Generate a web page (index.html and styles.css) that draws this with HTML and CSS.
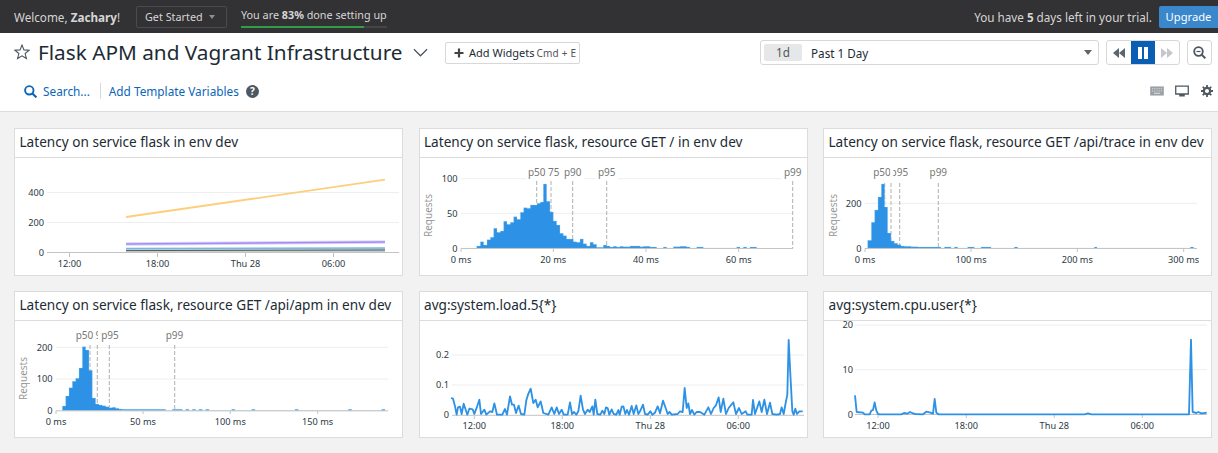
FILE: index.html
```html
<!DOCTYPE html>
<html lang="en">
<head>
    <meta charset="UTF-8">
    <title>Flask APM and Vagrant Infrastructure</title>
    <link rel="stylesheet" href="styles.css">
</head>
<body>
    <!-- Trial bar -->
    <div class="topbar">
        <span class="welcome">Welcome, <b>Zachary</b>!</span>
        <div class="get-started">Get Started <i class="caret-small"></i></div>
        <div class="setup">
            <span>You are <b>83%</b> done setting up</span>
            <div class="setup-track"><div class="setup-fill"></div></div>
        </div>
        <span class="trial">You have <b>5</b> days left in your trial.</span>
        <button class="upgrade" type="button">Upgrade</button>
    </div>

    <!-- Dashboard header -->
    <div class="header">
        <div class="title-row">
            <svg class="star" viewBox="0 0 18 18"><polygon points="9,1.2 11.2,6.6 17,7 12.5,10.7 14,16.4 9,13.3 4,16.4 5.5,10.7 1,7 6.8,6.6" fill="none" stroke="#4a5560" stroke-width="1.2"/></svg>
            <h1>Flask APM and Vagrant Infrastructure</h1>
            <svg class="chevron" viewBox="0 0 16 9"><polyline points="1,1 8,8 15,1" fill="none" stroke="#4a5560" stroke-width="1.3"/></svg>
            <button class="add-widgets" type="button">
                <svg viewBox="0 0 10 10"><path d="M5 0.5V9.5M0.5 5H9.5" stroke="#444" stroke-width="2.2"/></svg>
                Add Widgets <span class="shortcut">Cmd + E</span>
            </button>
            <div class="time-select">
                <span class="chip">1d</span>
                <span class="time-label">Past 1 Day</span>
                <i class="caret"></i>
            </div>
            <div class="time-controls">
                <button type="button"><svg viewBox="0 0 12 10"><path d="M6 0V10L0 5ZM12 0V10L6 5Z" fill="#5c6670"/></svg></button>
                <button class="active" type="button"><svg viewBox="0 0 12 12"><path d="M1 0H5V12H1ZM7 0H11V12H7Z" fill="#fff"/></svg></button>
                <button type="button"><svg viewBox="0 0 12 10"><path d="M0 0V10L6 5ZM6 0V10L12 5Z" fill="#c4c8cc"/></svg></button>
            </div>
            <button class="zoom-btn" type="button">
                <svg viewBox="0 0 13 13"><circle cx="5.5" cy="5.5" r="4.3" fill="none" stroke="#4a5560" stroke-width="1.8"/><path d="M8.6 8.6L12.3 12.3" stroke="#4a5560" stroke-width="2"/><path d="M3.5 5.5H7.5" stroke="#4a5560" stroke-width="1.2"/></svg>
            </button>
        </div>
        <div class="var-row">
            <svg class="search" viewBox="0 0 13 13"><circle cx="5.3" cy="5.3" r="4.2" fill="none" stroke="#0a66b8" stroke-width="1.9"/><path d="M8.4 8.4L12.4 12.4" stroke="#0a66b8" stroke-width="2.1"/></svg>
            <span class="link">Search...</span>
            <span class="divider"></span>
            <span class="link">Add Template Variables</span>
            <span class="help">?</span>
            <div class="tools">
                <svg width="14" height="10" viewBox="0 0 15 11"><rect x="0" y="0.5" width="15" height="10" fill="#9aa0a6"/><path d="M2 3H13M2 5.5H13" stroke="#e4e6e8" stroke-dasharray="1 1" stroke-width="1"/><path d="M4 8H11" stroke="#e4e6e8" stroke-width="1"/></svg>
                <svg width="14" height="12" viewBox="0 0 15 13"><path fill-rule="evenodd" d="M0 0.5H15V10.5H0ZM1.4 1.9V9H13.6V1.9ZM4.5 10.5H10.5V12.5H4.5Z" fill="#4e5860"/></svg>
                <svg class="gear" width="12" height="12" viewBox="0 0 13 13"><circle cx="6.5" cy="6.5" r="3.4" fill="none" stroke="#4e5860" stroke-width="2.4"/><path d="M6.5 0V13M0 6.5H13M1.9 1.9L11.1 11.1M11.1 1.9L1.9 11.1" stroke="#4e5860" stroke-width="1.9" stroke-dasharray="2.4 8.2 2.4 0"/></svg>
            </div>
        </div>
    </div>

    <div class="board">
        <!-- Widget 1 -->
        <div class="widget">
            <div class="widget-title">Latency on service flask in env dev</div>
            <svg class="chart" viewBox="15 158 387 117">
                <path class="grid" d="M47 192.5H399M47 222.5H399"/>
                <path class="axis" d="M47 252.5H399M69.5 252.5V257M157.5 252.5V257M245.5 252.5V257M333.5 252.5V257"/>
                <text class="tick end" x="44" y="195.5">400</text>
                <text class="tick end" x="44" y="225.5">200</text>
                <text class="tick end" x="44" y="255.5">0</text>
                <text class="tick mid" x="69.5" y="266.5">12:00</text>
                <text class="tick mid" x="157.5" y="266.5">18:00</text>
                <text class="tick mid" x="245.5" y="266.5">Thu 28</text>
                <text class="tick mid" x="333.5" y="266.5">06:00</text>
                <polyline class="line-yellow" points="126,217 385,179.7"/>
                <polyline class="line-halo" points="126,244 385,242"/>
                <polyline class="line-purple" points="126,244 385,242"/>
                <polyline class="line-steel" points="126,250 385,250"/>
                <polyline class="line-pale" points="126,248.6 385,248"/>
                <polyline class="line-dark" points="126,250.6 385,250"/>
            </svg>
        </div>

        <!-- Widget 2 -->
        <div class="widget">
            <div class="widget-title">Latency on service flask, resource GET / in env dev</div>
            <svg class="chart" viewBox="420 158 387 117">
                <path class="grid" d="M461 178.7H793M461 213.3H793"/>
                <rect class="mask" x="526" y="166" width="22" height="14"/>
                <rect class="mask" x="548" y="166" width="14" height="14"/>
                <rect class="mask" x="562" y="166" width="22" height="14"/>
                <rect class="mask" x="595" y="166" width="23" height="14"/>
                <rect class="mask" x="781" y="166" width="24" height="14"/>
                <path class="pct-line" d="M536.7 181V248M551 181V248M572.7 181V248M606.7 181V248M792.7 181V248"/>
                <g transform="translate(415 125) scale(.33333)">
                    <path class="bars" d="M185 370V363H196V350H206V360H216V344H226V337H236V310H246V322H256V318H266V289H276V298H286V292H296V275H306V283H316V262H326V248H336V250H346V240H366V235H376V231H385V177H395V229H405V261H415V288H425V300H435V325H445V332H455V342H475V350H485V352H495V342H505V356H515V363H525V352H535V358H545V367H565V360H575V363H585V366H595V364H605V366H615V364H625V365H645V363H675V365H685V364H705V366H725V370H745V366H755V370H775V365H795V364H815V366H825V370H845V366H865V370H965V366H975V370H985V366H995V370H1005V366H1025V370Z"/>
                </g>
                <path class="axis" d="M461 248.5H793M461 248.5V252M553.3 248.5V252M646 248.5V252M738.7 248.5V252"/>
                <text class="pct mid" x="536.7" y="176">p50</text>
                <text class="pct mid" x="553.7" y="176">75</text>
                <text class="pct mid" x="572.7" y="176">p90</text>
                <text class="pct mid" x="606.7" y="176">p95</text>
                <text class="pct mid" x="792.7" y="176">p99</text>
                <text class="tick end" x="457.5" y="182">100</text>
                <text class="tick end" x="457.5" y="216.5">50</text>
                <text class="tick end" x="457.5" y="251.5">0</text>
                <text class="tick mid" x="461" y="262.5">0 ms</text>
                <text class="tick mid" x="553.3" y="262.5">20 ms</text>
                <text class="tick mid" x="646" y="262.5">40 ms</text>
                <text class="tick mid" x="738.7" y="262.5">60 ms</text>
                <text class="req" transform="translate(432 215.5) rotate(-90)">Requests</text>
            </svg>
        </div>

        <!-- Widget 3 -->
        <div class="widget">
            <div class="widget-title">Latency on service flask, resource GET /api/trace in env dev</div>
            <svg class="chart" viewBox="824 158 387 117">
                <path class="grid" d="M865 203.3H1197"/>
                <path class="pct-line" d="M884.7 183V248M891 183V248M899.7 183V248M938.3 183V248"/>
                <g transform="translate(818 125) scale(.33333)">
                    <path class="bars" d="M149 370V346H160V292H170V255H180V216H190V177H200V246H209V324H219V348H229V355H239V359H249V363H259V364H279V365H299V366H369V370H379V366H399V370H409V366H419V370H449V366H469V370H489V366H519V370H589V366H599V370H829V366H837V370H1117V366H1127V370Z"/>
                </g>
                <path class="axis" d="M865 248.5H1197M865 248.5V252M971 248.5V252M1077.3 248.5V252M1183.7 248.5V252"/>
                <text class="pct mid" x="882" y="176">p50</text>
                <text class="pct" x="890.6" y="176">p95</text>
                <rect class="mask" x="890.4" y="165" width="2.8" height="14"/>
                <text class="pct mid" x="938.3" y="176">p99</text>
                <text class="tick end" x="861.5" y="206.5">200</text>
                <text class="tick end" x="861.5" y="251.5">0</text>
                <text class="tick mid" x="865" y="262.5">0 ms</text>
                <text class="tick mid" x="971" y="262.5">100 ms</text>
                <text class="tick mid" x="1077.3" y="262.5">200 ms</text>
                <text class="tick mid" x="1183.7" y="262.5">300 ms</text>
                <text class="req" transform="translate(836.5 215.5) rotate(-90)">Requests</text>
            </svg>
        </div>

        <!-- Widget 4 -->
        <div class="widget">
            <div class="widget-title">Latency on service flask, resource GET /api/apm in env dev</div>
            <svg class="chart" viewBox="15 321 387 116">
                <path class="grid" d="M56 347.3H388M56 379H388"/>
                <path class="pct-line" d="M90 345V410M97.3 345V410M109.3 345V410M174.7 345V410"/>
                <g transform="translate(10 288) scale(.33333)">
                    <path class="bars" d="M157 368V354H167V324H177V299H187V280H197V271H207V240H217V176H227V186H237V247H247V330H257V348H267V351H277V353H287V356H297V359H307V358H317V361H327V363H337V364H467V368H487V364H517V368H527V364H537V368H547V364H557V368H567V364H577V368H587V364H597V368H665V364H675V368H725V364H735V368H855V364H865V368H1015V364H1025V368H1115V364H1125V368Z"/>
                </g>
                <path class="axis" d="M56 410.8H388M56 410.8V414M143 410.8V414M230.3 410.8V414M317.7 410.8V414"/>
                <text class="pct mid" x="84.5" y="339">p50</text>
                <text class="pct" x="95.5" y="339">9</text>
                <rect class="mask" x="98" y="328" width="3.5" height="14"/>
                <text class="pct mid" x="110" y="339">p95</text>
                <text class="pct mid" x="174.5" y="339">p99</text>
                <text class="tick end" x="52.5" y="350.5">200</text>
                <text class="tick end" x="52.5" y="382">100</text>
                <text class="tick end" x="52.5" y="414">0</text>
                <text class="tick mid" x="56" y="424.5">0 ms</text>
                <text class="tick mid" x="143" y="424.5">50 ms</text>
                <text class="tick mid" x="230.3" y="424.5">100 ms</text>
                <text class="tick mid" x="317.7" y="424.5">150 ms</text>
                <text class="req" transform="translate(27 378.5) rotate(-90)">Requests</text>
            </svg>
        </div>

        <!-- Widget 5 -->
        <div class="widget">
            <div class="widget-title">avg:system.load.5{*}</div>
            <svg class="chart" viewBox="420 321 387 116">
                <path class="grid" d="M452 355H804M452 385H804"/>
                <path class="axis" d="M452 415.3H804M474.3 415.3V419M562.3 415.3V419M650.3 415.3V419M738.3 415.3V419"/>
                <g transform="translate(415 288) scale(.33333)">
                    <polyline class="series" points="108,330 114,332 120,355 125,380 129,358 135,356 140,378 146,347 152,365 157,380 163,362 173,364 178,378 184,362 193,335 198,378 208,365 214,380 225,370 232,372 238,346 246,380 262,380 270,363 276,380 285,325 291,350 297,350 303,375 311,353 318,378 328,380 334,337 339,320 347,302 355,345 362,335 368,358 377,340 385,375 400,380 410,358 418,378 425,358 432,378 440,365 446,380 458,380 465,343 471,378 477,372 484,380 490,370 497,323 504,365 510,378 518,365 524,372 532,355 536,380 541,335 547,378 556,380 562,368 568,378 573,358 578,360 583,380 590,364 596,378 604,380 610,366 614,380 620,356 625,355 631,378 636,366 642,380 650,354 656,378 664,352 670,378 676,368 684,350 690,378 698,380 706,370 712,380 720,374 728,355 735,376 744,338 752,360 758,378 764,372 770,380 788,378 795,370 803,372 809,300 815,360 820,346 825,378 831,366 838,380 845,372 855,372 868,380 880,358 888,378 896,360 903,352 911,328 917,372 925,332 933,378 941,360 955,343 963,378 972,360 980,378 992,370 997,380 1010,380 1014,336 1020,378 1033,340 1040,372 1048,335 1056,378 1065,344 1072,378 1085,380 1095,378 1100,358 1106,378 1112,345 1117,320 1121,156 1126,258 1132,370 1136,380 1141,362 1146,378 1153,370 1163,370"/>
                </g>
                <text class="tick end" x="449" y="358">0.2</text>
                <text class="tick end" x="449" y="388">0.1</text>
                <text class="tick end" x="449" y="418">0</text>
                <text class="tick mid" x="474.3" y="429">12:00</text>
                <text class="tick mid" x="562.3" y="429">18:00</text>
                <text class="tick mid" x="650.3" y="429">Thu 28</text>
                <text class="tick mid" x="738.3" y="429">06:00</text>
            </svg>
        </div>

        <!-- Widget 6 -->
        <div class="widget">
            <div class="widget-title">avg:system.cpu.user{*}</div>
            <svg class="chart chart-tall" viewBox="824 321 387 116">
                <path class="grid" d="M855 325H1207M855 369.7H1207"/>
                <path class="axis" d="M855 414.5H1207M878 414.5V418M966.3 414.5V418M1054.3 414.5V418M1142.3 414.5V418"/>
                <g transform="translate(818 288) scale(.33333)">
                    <polyline class="series" points="111,322 116,372 135,374 140,379 155,379 160,368 165,366 170,343 175,368 180,378 185,379 250,379 258,375 268,377 276,372 285,376 292,378 315,379 325,371 335,373 345,377 350,333 355,374 362,379 800,379 810,376 820,379 1113,379 1119,155 1124,372 1135,375 1141,372 1150,376 1160,375 1166,374"/>
                </g>
                <text class="tick end" x="853" y="328">20</text>
                <text class="tick end" x="853" y="373">10</text>
                <text class="tick end" x="853" y="417.5">0</text>
                <text class="tick mid" x="878" y="429">12:00</text>
                <text class="tick mid" x="966.3" y="429">18:00</text>
                <text class="tick mid" x="1054.3" y="429">Thu 28</text>
                <text class="tick mid" x="1142.3" y="429">06:00</text>
            </svg>
        </div>
    </div>
</body>
</html>
```

FILE: styles.css
```css
/* Basic Styles */
* {
    box-sizing: border-box;
}
html, body {
    height: 100%;
}
body {
    margin: 0;
    background: #f2f2f2;
    color: #1c2b34;
    font-family: "Noto Sans", sans-serif;
    overflow: hidden;
}
button {
    font-family: inherit;
    cursor: pointer;
}

/* Trial bar */
.topbar {
    height: 33px;
    background: #323133;
    color: #d6d6d6;
    font-size: 11.7px;
    display: flex;
    align-items: center;
    padding-left: 14px;
}
.welcome {
    width: 122px;
    white-space: nowrap;
}
.get-started {
    width: 91px;
    height: 22px;
    border: 1px solid #4b4a4c;
    border-radius: 2px;
    display: flex;
    align-items: center;
    justify-content: space-between;
    padding: 0 11px 0 8px;
    font-size: 10.8px;
    white-space: nowrap;
}
.caret-small {
    border: 3px solid transparent;
    border-top: 4px solid #8d8d8d;
    border-bottom: 0;
}
.setup {
    margin-left: 14px;
    width: 146px;
    height: 22px;
    display: flex;
    flex-direction: column;
    justify-content: space-between;
    font-size: 10.8px;
    white-space: nowrap;
}
.setup span {
    line-height: 17px;
}
.setup-track {
    height: 2px;
    background: #454446;
}
.setup-fill {
    width: 84%;
    height: 100%;
    background: #2f9e44;
}
.trial {
    margin-left: auto;
    margin-right: 7px;
}
.upgrade {
    width: 59px;
    height: 22px;
    background: #3a87cc;
    border: none;
    border-radius: 2px 0 0 2px;
    color: #fff;
    font-size: 11.2px;
    padding: 0;
}

/* Dashboard header */
.header {
    height: 79px;
    padding-top: 7px;
    background: #fff;
    border-bottom: 1px solid #dcdcdc;
}
.title-row {
    display: flex;
    align-items: center;
    height: 25px;
    padding: 0 6px 0 14px;
}
.star {
    width: 16px;
    height: 16px;
    margin-bottom: 1px;
}
h1 {
    margin: 0 0 2px 8px;
    font-size: 20.75px;
    font-weight: 400;
    white-space: nowrap;
}
.chevron {
    width: 15px;
    height: 9px;
    margin-left: 10px;
}
.add-widgets {
    margin-left: 17.5px;
    width: 135px;
    height: 22px;
    background: #fff;
    border: 1px solid #d8d8d8;
    border-radius: 2px;
    font-size: 11px;
    color: #1c2b34;
    display: flex;
    align-items: center;
    gap: 5px;
    padding: 0 0 0 8px;
    white-space: nowrap;
}
.add-widgets svg {
    width: 10px;
    height: 10px;
}
.shortcut {
    font-size: 10px;
    color: #555;
    margin-left: -3px;
    letter-spacing: .2px;
}
.time-select {
    margin-left: auto;
    width: 339px;
    height: 25px;
    border: 1px solid #d8d8d8;
    border-radius: 3px;
    display: flex;
    align-items: center;
    font-size: 11.7px;
    padding: 0 6px 0 3px;
}
.chip {
    width: 38px;
    height: 17px;
    background: #e6e7e9;
    border-radius: 2px;
    color: #555;
    text-align: center;
    line-height: 17px;
}
.time-label {
    margin-left: 9px;
}
.caret {
    margin-left: auto;
    border: 4.5px solid transparent;
    border-top: 5px solid #5c6670;
    border-bottom: 0;
}
.time-controls {
    margin-left: 7px;
    width: 74px;
    height: 25px;
    border: 1px solid #d8d8d8;
    border-radius: 3px;
    display: flex;
    background: #fff;
}
.time-controls button {
    flex: 1;
    border: none;
    background: none;
    padding: 0;
    display: flex;
    align-items: center;
    justify-content: center;
}
.time-controls svg {
    width: 12px;
    height: 12px;
}
.time-controls .active {
    background: #0a5fb4;
}
.zoom-btn {
    margin-left: 7px;
    width: 25px;
    height: 25px;
    background: #fff;
    border: 1px solid #d8d8d8;
    border-radius: 3px;
    padding: 0;
    display: flex;
    align-items: center;
    justify-content: center;
}
.zoom-btn svg {
    width: 13px;
    height: 13px;
}
.var-row {
    display: flex;
    align-items: center;
    height: 16px;
    margin-top: 18px;
    padding-left: 24px;
    font-size: 11.8px;
    color: #0a66b8;
}
.search {
    width: 13px;
    height: 13px;
    margin-right: 6px;
}
.divider {
    width: 1px;
    height: 16px;
    background: #d8d8d8;
    margin: 0 8px 0 10px;
}
.help {
    width: 13px;
    height: 13px;
    margin-left: 7px;
    border-radius: 50%;
    background: #4e5860;
    color: #fff;
    font-size: 10px;
    font-weight: 700;
    line-height: 13px;
    text-align: center;
}
.tools {
    margin-left: auto;
    margin-right: 5px;
    display: flex;
    align-items: center;
    gap: 11px;
}
.gear {
    margin-left: 1px;
}

/* Widgets */
.board {
    display: grid;
    grid-template-columns: repeat(3, 389px);
    column-gap: 15.5px;
    row-gap: 15px;
    padding: 16px 0 0 14px;
}
.widget {
    background: #fff;
    border: 1px solid #dcdcdc;
}
.widget-title {
    height: 29px;
    border-bottom: 1px solid #dcdcdc;
    padding: 0 0 3px 4.5px;
    font-size: 13.6px;
    line-height: 25px;
    white-space: nowrap;
    overflow: hidden;
}
.chart {
    display: block;
    width: 387px;
}
.widget:nth-child(-n+3) .chart {
    height: 117px;
}
.widget:nth-child(n+4) .chart {
    height: 116px;
}
.chart-tall {
    overflow: visible;
}

/* Chart parts */
.grid {
    stroke: #eeeeee;
    stroke-width: 1;
    fill: none;
}
.axis {
    stroke: #c4c4c4;
    stroke-width: 1;
    fill: none;
}
.tick {
    font-size: 9.2px;
    fill: #2c3a44;
}
.end {
    text-anchor: end;
}
.mid {
    text-anchor: middle;
}
.pct {
    font-size: 10px;
    fill: #777;
}
.pct-line {
    stroke: #b0b0b0;
    stroke-width: 1;
    stroke-dasharray: 4 2;
    fill: none;
}
.mask {
    fill: #fff;
}
.req {
    font-size: 10px;
    fill: #999;
    text-anchor: middle;
}
.bars {
    fill: #2d92e5;
    stroke: #a9d4f6;
    stroke-width: 1;
}
.series {
    fill: none;
    stroke: #2d92e5;
    stroke-width: 5.5;
    stroke-linejoin: round;
}
.line-yellow {
    stroke: #fdcf7a;
    stroke-width: 1.8;
}
.line-halo {
    stroke: #dcd5fb;
    stroke-width: 3.5;
}
.line-purple {
    stroke: #a08cf2;
    stroke-width: 1.5;
}
.line-pale {
    stroke: #7fb4dc;
    stroke-width: 1.5;
}
.line-steel {
    stroke: #b5d2e9;
    stroke-width: 4;
}
.line-dark {
    stroke: #6a5a30;
    stroke-width: 1;
}
```
